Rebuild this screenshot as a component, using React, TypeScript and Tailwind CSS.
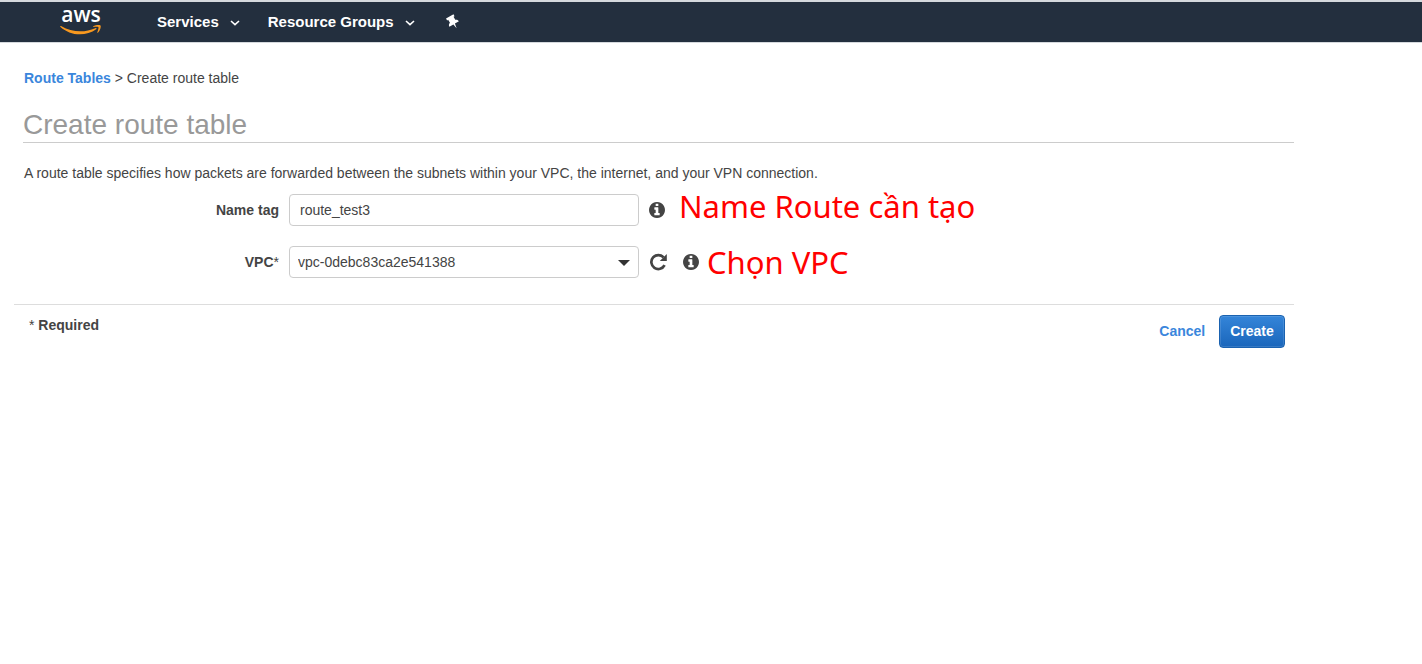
import type { ReactNode } from "react";

function AwsLogo() {
  return (
    <a href="#home" aria-label="AWS home" className="flex h-8 w-11 flex-col items-center text-white">
      <span className="h-[18px] font-['Open_Sans',sans-serif] text-[21px] leading-4 font-semibold">aws</span>
      <svg viewBox="0 0 44 12" className="h-3 w-11 shrink-0" fill="#f7981f" aria-hidden="true">
        <path d="M1.2 2.2C1.5 1.8 2 1.9 2.5 2.2C8 5.4 14.600 7.300 21.500 7.300C26.500 7.300 31.500 6.200 36.300 4.200C37.300 3.800 38 4.700 37.200 5.300C32.800 8.600 26.500 10.300 21 10.300C13.500 10.300 6.700 7.500 1.500 2.900C1.200 2.700 1.100 2.400 1.200 2.200Z" />
        <path d="M34.200 2.300C36.500.8 40.600.7 41.500 1.400C42.300 2.200 41.200 6.600 38.800 8.700C38.400 9 38 8.800 38.200 8.400C38.900 6.800 39.900 3.900 39.400 3.100C38.900 2.400 36.100 2.700 34.600 2.900C34.100 2.900 33.900 2.600 34.200 2.300Z" />
      </svg>
    </a>
  );
}

function NavMenu({ children }: { children: ReactNode }) {
  return (
    <button type="button" className="flex items-center gap-[11px] text-[15px] leading-5 font-bold text-white">
      {children}
      <svg viewBox="0 0 10 6" className="mt-[2px] h-[6px] w-[10px]" fill="none" stroke="currentColor" strokeWidth="1.6" aria-hidden="true">
        <path d="M1 1l4 3.600L9 1" />
      </svg>
    </button>
  );
}

function InfoButton({ label }: { label: string }) {
  return (
    <button type="button" aria-label={label} className="text-[#444]">
      <svg viewBox="0 128 1536 1536" className="size-4" fill="currentColor" aria-hidden="true">
        <path d="M1024 1376v-160q0-14-9-23t-23-9h-96v-512q0-14-9-23t-23-9h-320q-14 0-23 9t-9 23v160q0 14 9 23t23 9h96v320h-96q-14 0-23 9t-9 23v160q0 14 9 23t23 9h448q14 0 23-9t9-23zm-128-896v-160q0-14-9-23t-23-9h-192q-14 0-23 9t-9 23v160q0 14 9 23t23 9h192q14 0 23-9t9-23zm640 416q0 209-103 385.500t-279.500 279.500-385.500 103-385.500-103-279.500-279.500-103-385.500 103-385.500 279.500-279.500 385.500-103 385.500 103 279.500 279.500 103 385.500z" />
      </svg>
    </button>
  );
}

function Note({ children }: { children: ReactNode }) {
  return (
    <span className="font-['Noto_Sans',sans-serif] text-[31px] leading-8 whitespace-nowrap text-[#ff0000]">
      {children}
    </span>
  );
}

export default function App() {
  return (
    <div className="min-h-screen bg-white font-['Liberation_Sans',Arial,sans-serif] text-[14px] leading-5 text-[#444]">
      <header className="flex h-[43px] items-center border-t-2 border-b border-[#d5d9dd] bg-[#232f3e] pl-[59px]">
        <AwsLogo />
        <nav className="ml-[54px] flex items-center gap-7">
          <NavMenu>Services</NavMenu>
          <NavMenu>Resource Groups</NavMenu>
          <button type="button" aria-label="Pin shortcuts" className="ml-[2px] text-white">
            <svg viewBox="0 0 16 16" className="size-4" fill="currentColor" aria-hidden="true">
              <path transform="rotate(-30 8 8)" d="M3.700 1.500h8.600v2.200h-1.200v3.500c1.600.5 2.400 1.600 2.400 3.100H8.900L8 15.200 7.100 10.300H2.500c0-1.500.8-2.600 2.400-3.100V3.700H3.700z" />
            </svg>
          </button>
        </nav>
      </header>

      <main className="ml-[14px] w-[90%] pt-[25px]">
        <nav aria-label="Breadcrumb" className="pl-[10px]">
          <a href="#route-tables" className="font-bold text-[#3a86dc]">Route Tables</a>
          {" > "}
          <span>Create route table</span>
        </nav>

        <h1 className="mt-5 ml-[9px] border-b border-[#ccc] text-[28px] leading-[34px] text-[#999]">
          Create route table
        </h1>
        <p className="mt-5 pl-[10px]">
          A route table specifies how packets are forwarded between the subnets within your VPC, the internet, and your VPN connection.
        </p>

        <form>
          <div className="mt-[11px] flex flex-col gap-5">
            <div className="flex h-8 items-center gap-[10px]">
              <label htmlFor="name-tag" className="w-[265px] text-right font-bold">Name tag</label>
              <input
                id="name-tag"
                type="text"
                defaultValue="route_test3"
                className="h-8 w-[350px] rounded border border-[#ccc] bg-white px-[10px]"
              />
              <InfoButton label="About the name tag" />
              <div className="-mt-2 ml-1">
                <Note>Name Route cần tạo</Note>
              </div>
            </div>
            <div className="flex h-8 items-center gap-[10px]">
              <label htmlFor="vpc" className="w-[265px] text-right font-bold">
                VPC<span className="font-normal">*</span>
              </label>
              <div className="relative">
                <select
                  id="vpc"
                  defaultValue="vpc-0debc83ca2e541388"
                  className="block h-8 w-[350px] appearance-none rounded border border-[#ccc] bg-white px-2"
                >
                  <option>vpc-0debc83ca2e541388</option>
                </select>
                <svg viewBox="0 0 12 6" className="pointer-events-none absolute top-[14px] right-[9px] h-[6px] w-3" fill="#333" aria-hidden="true">
                  <path d="M0 0h12L6 6z" />
                </svg>
              </div>
              <button type="button" aria-label="Refresh VPC list">
                <svg viewBox="0 0 18 18" className="h-[18px] w-[18px]" aria-hidden="true">
                  <path d="M14.600 4.400A7 7 0 1 0 15.600 12.200" fill="none" stroke="#444" strokeWidth="2.700" />
                  <path d="M17.800 1v7h-7z" fill="#444" />
                </svg>
              </button>
              <div className="ml-[6px] flex items-center gap-2">
                <InfoButton label="About the VPC" />
                <Note>Chọn VPC</Note>
              </div>
            </div>
          </div>

          <footer className="mt-[26px] flex items-start justify-between border-t border-[#ddd] pt-[10px] pr-[9px] pl-[15px]">
            <p><span>*</span> <b>Required</b></p>
            <div className="flex items-baseline gap-[14px]">
              <a href="#cancel" className="font-bold text-[#3a86dc]">Cancel</a>
              <button
                type="button"
                className="h-[33px] rounded border border-[#1a62b0] bg-linear-to-b from-[#3485d9] to-[#1a66bb] px-[10px] pb-[2px] font-bold text-white shadow-[inset_0_0_0_1px_rgba(255,255,255,0.12)]"
              >
                Create
              </button>
            </div>
          </footer>
        </form>
      </main>
    </div>
  );
}
